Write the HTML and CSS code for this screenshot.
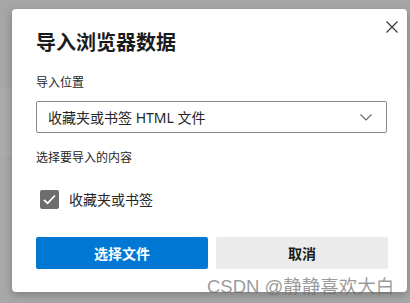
FILE: index.html
```html
<!DOCTYPE html>
<html>
  <head>
    <meta charset="utf-8">
    <title>导入浏览器数据</title>
    <link rel="stylesheet" href="styles.css">
  </head>
  <body>
    <div class="dialog">
      <button class="close" title="关闭">
        <svg width="12" height="12" viewBox="0 0 12 12"><path d="M0.5 0.5L11.5 11.5M11.5 0.5L0.5 11.5" stroke="#333" stroke-width="1.1" fill="none"/></svg>
      </button>
      <h1 class="title">导入浏览器数据</h1>
      <div class="label">导入位置</div>
      <div class="select">
        <span class="select-text">收藏夹或书签 HTML 文件</span>
        <svg class="chevron" width="12" height="7" viewBox="0 0 12 7"><path d="M0.5 0.5L6 6L11.5 0.5" stroke="#666" stroke-width="1.1" fill="none"/></svg>
      </div>
      <div class="label section">选择要导入的内容</div>
      <label class="check-row">
        <span class="checkbox">
          <svg width="13" height="11" viewBox="0 0 13 11"><path d="M1 5.8L4.6 9.3L12 1.5" stroke="#fff" stroke-width="1.8" fill="none"/></svg>
        </span>
        <span class="check-text">收藏夹或书签</span>
      </label>
      <div class="buttons">
        <button class="btn primary">选择文件</button>
        <button class="btn secondary">取消</button>
      </div>
    </div>
    <div class="watermark">CSDN @静静喜欢大白</div>
  </body>
</html>
```

FILE: styles.css
```css
html, body {
  margin: 0;
  height: 100%;
}
body {
  padding: 9px 0 0 12px;
  box-sizing: border-box;
  overflow: hidden;
  background: linear-gradient(to bottom, #a6a6a6 0, #a6a6a6 89px, #b0b0b0 89px, #acacac 90px, #aaaaaa 90px, #aaaaaa 153px, #b2b2b2 153px, #a8a8a8 155px, #a8a8a8 100%);
  font-family: "Noto Sans", "Noto Sans CJK SC", sans-serif;
  position: relative;
}
.dialog {
  position: relative;
  width: 395px;
  height: 283px;
  box-sizing: border-box;
  background: #fff;
  border-radius: 4px;
  box-shadow: 0 3px 8px rgba(0, 0, 0, 0.25);
  padding: 20px 20px 0 24px;
}
.close {
  position: absolute;
  top: 12px;
  right: 9px;
  width: 12px;
  height: 12px;
  padding: 0;
  border: 0;
  background: none;
  display: flex;
}
.title {
  margin: 0;
  font-size: 20px;
  line-height: 28px;
  font-weight: 700;
  color: #1b1b1b;
}
.label {
  margin-top: 18px;
  font-size: 12px;
  line-height: 16px;
  color: #262626;
}
.label.section {
  margin-top: 17px;
}
.select {
  margin-top: 10px;
  width: 351px;
  height: 32px;
  box-sizing: border-box;
  border: 1.5px solid #8a8a8a;
  border-radius: 2px;
  display: flex;
  align-items: center;
  padding: 0 14px 0 11px;
}
.select-text {
  flex: 1;
  font-size: 14px;
  color: #262626;
}
.check-row {
  margin-top: 23px;
  display: flex;
  align-items: center;
  height: 20px;
  padding-left: 4px;
}
.checkbox {
  width: 19px;
  height: 19px;
  border-radius: 2px;
  background: #6d6d6d;
  display: flex;
  align-items: center;
  justify-content: center;
}
.check-text {
  margin-left: 10px;
  font-size: 14px;
  color: #262626;
}
.buttons {
  margin-top: 28px;
  display: flex;
  gap: 8px;
  width: 352px;
}
.btn {
  flex: 1;
  height: 32px;
  border: 0;
  border-radius: 2px;
  font-family: "Noto Sans", "Noto Sans CJK SC", sans-serif;
  font-size: 14px;
  font-weight: 700;
}
.primary {
  background: #0078d4;
  color: #fff;
}
.secondary {
  background: #ebebeb;
  color: #1b1b1b;
}
.watermark {
  position: absolute;
  left: 207px;
  top: 272px;
  font-family: "Liberation Sans", "Noto Sans CJK SC", sans-serif;
  font-size: 18.5px;
  color: rgba(110, 110, 110, 0.7);
  white-space: nowrap;
}
```
